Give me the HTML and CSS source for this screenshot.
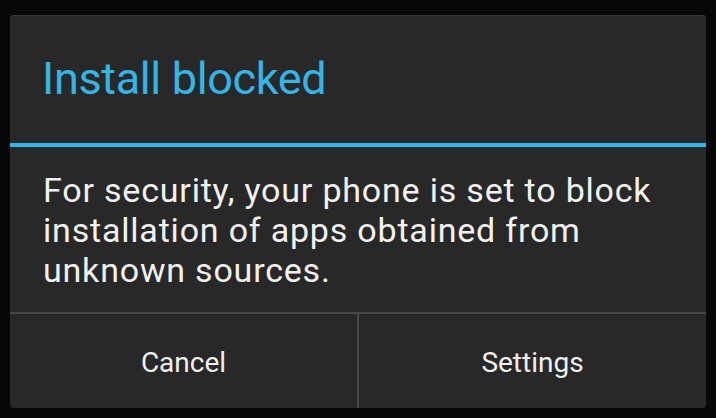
FILE: index.html
```html
<!DOCTYPE html>
<html>
<head>
<meta charset="utf-8">
<link rel="stylesheet" href="styles.css">
</head>
<body>
<div class="dialog">
  <div class="header"><h1 class="title">Install blocked</h1></div>
  <div class="accent"></div>
  <div class="message">For security, your phone is set to block installation of apps obtained from unknown sources.</div>
  <div class="buttons">
    <div class="btn">Cancel</div>
    <div class="sep"></div>
    <div class="btn">Settings</div>
  </div>
</div>
</body>
</html>
```
FILE: styles.css
```css
html, body {
  margin: 0;
  padding: 0;
  background: #060708;
  width: 716px;
  height: 418px;
  overflow: hidden;
  font-family: Roboto, "Noto Sans", sans-serif;
}
body {
  padding: 15px 10px 0 10px;
  box-sizing: border-box;
}
.dialog {
  width: 696px;
  height: 393px;
  background: #282828;
  border-radius: 3px;
  border-top: 1px solid #363636;
  box-sizing: border-box;
  display: flex;
  flex-direction: column;
}
.header {
  height: 127px;
  display: flex;
  align-items: center;
  padding-left: 32px;
}
.title {
  margin: 0;
  font-weight: 400;
  font-size: 45px;
  letter-spacing: -0.35px;
  color: #33b5e5;
  line-height: 1.171;
}
.accent {
  height: 4px;
  background: #33b5e5;
}
.message {
  padding: 23px 30px 22px 33px;
  font-size: 34px;
  letter-spacing: 0.8px;
  line-height: 40px;
  color: #f2f2f2;
  height: 120px;
}
.buttons {
  flex: 1;
  border-top: 2px solid #474747;
  display: flex;
}
.btn {
  flex: 1;
  display: flex;
  align-items: center;
  justify-content: center;
  font-size: 28px;
  color: #f0f0f0;
  padding-top: 3px;
}
.sep {
  width: 2px;
  background: #474747;
}
```
